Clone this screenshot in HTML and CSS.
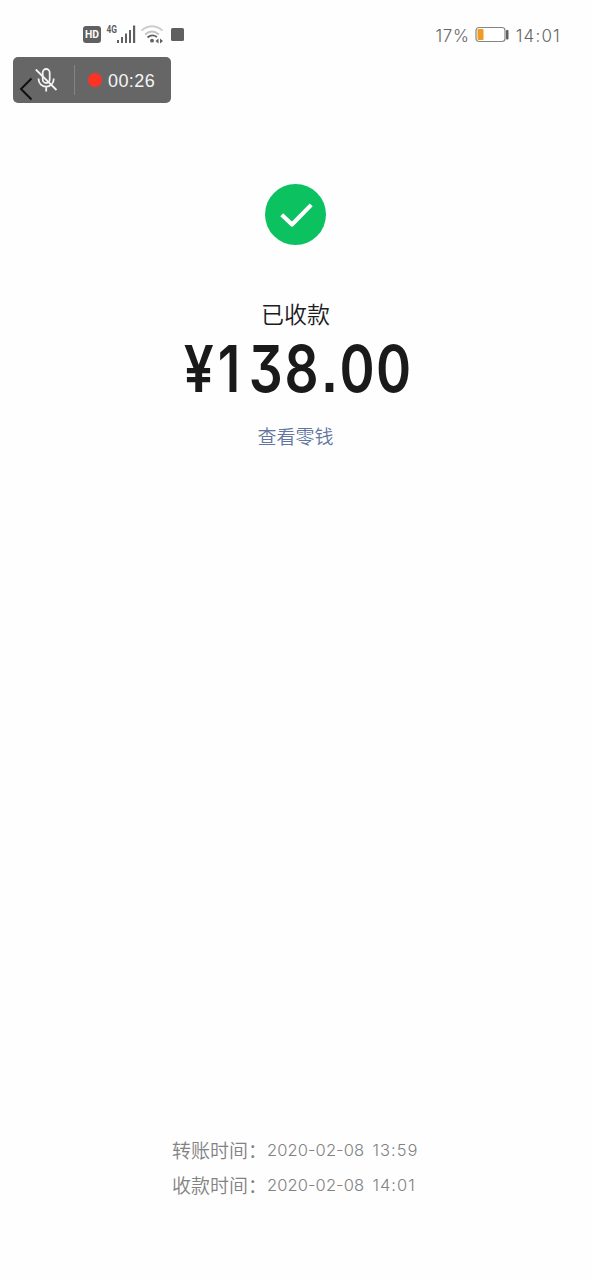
FILE: index.html
```
<!DOCTYPE html>
<html lang="zh-CN">
<head>
<meta charset="utf-8">
<title>已收款</title>
<link rel="stylesheet" href="styles.css">
</head>
<body>
<div class="screen">
  <header class="status">
    <div class="status-left">
      <svg class="signals" viewBox="0 0 104 24" width="104" height="24">
        <rect x="0" y="4" width="18" height="17" rx="3" fill="#606060"/>
        <text x="9" y="16.4" class="hd" textLength="14" lengthAdjust="spacingAndGlyphs">HD</text>
        <text x="23.5" y="10.5" class="net" textLength="10.5" lengthAdjust="spacingAndGlyphs">4G</text>
        <g fill="#606060">
          <rect x="34" y="18" width="2" height="3"/>
          <rect x="38" y="15" width="2" height="6"/>
          <rect x="42" y="11.5" width="2" height="9.5"/>
          <rect x="46" y="8" width="2" height="13"/>
          <rect x="50" y="3.5" width="2.2" height="17.5"/>
        </g>
        <g fill="none" stroke-width="1.800">
          <path d="M58.500 8.500Q69 0 79.500 8.500" stroke="#cdcdcd"/>
          <path d="M62 12.500Q69 6.500 76 12.500" stroke="#c4c4c4"/>
          <path d="M64.500 15.500Q69 11.500 74 15" stroke="#606060"/>
        </g>
        <circle cx="69" cy="18.700" r="1.900" fill="#606060"/>
        <path d="M75.500 16.500v5l-3-2.500zM77 16.500v5l3-2.500z" fill="#606060"/>
        <rect x="88" y="6" width="13" height="13" rx="1.500" fill="#606060"/>
      </svg>
    </div>
    <div class="status-right">
      <span class="percent">17%</span>
      <svg class="battery" viewBox="0 0 35 18" width="35" height="18">
        <rect x="1" y="1.500" width="29" height="14" rx="3" fill="#fff" stroke="#858585" stroke-width="1.200"/>
        <rect x="2.500" y="3" width="6" height="11" rx="1" fill="#ee9b22"/>
        <rect x="31" y="4" width="2.500" height="9.500" rx=".8" fill="#606060"/>
      </svg>
      <span class="clock">14:01</span>
    </div>
  </header>

  <div class="recorder">
    <svg class="mic" viewBox="0 0 61 46" width="61" height="46" fill="none">
      <path d="M18.500 21.500L8 32L18.500 42.500" stroke="#111" stroke-width="2"/>
      <g stroke="#f2f2f2" stroke-width="1.800">
        <rect x="29.700" y="12" width="7" height="14" rx="3.500"/>
        <path d="M25.500 21.500C25.500 32.500 40.800 32.500 40.800 21.500M33.200 30v4.500M22.800 12.500L43.500 33"/>
      </g>
    </svg>
    <span class="divider"></span>
    <span class="dot"></span>
    <span class="elapsed">00:26</span>
  </div>

  <main class="result">
    <svg class="check" viewBox="0 0 62 62" width="62" height="62">
      <circle cx="30.500" cy="31.500" r="30.500" fill="#0bc160"/>
      <path d="M16.700 31.700L27 41.500L46.200 21.900" fill="none" stroke="#fff" stroke-width="4.200" stroke-linejoin="round"/>
    </svg>
    <h1 class="title">已收款</h1>
    <svg class="amount" viewBox="0 0 240 80" width="240" height="80">
      <text class="amount-text" transform="translate(0 62.500) scale(.82 1)" x="27.700 64.800 109.500 153 187.200 220.700 265.500">¥138.00</text>
    </svg>
    <a class="link">查看零钱</a>
  </main>

  <footer class="times">
    <div class="row"><span class="label">转账时间：</span><span class="date">2020-02-08</span><span class="time">13:59</span></div>
    <div class="row"><span class="label">收款时间：</span><span class="date">2020-02-08</span><span class="time">14:01</span></div>
  </footer>
</div>
</body>
</html>
```
FILE: styles.css
```
body {
  margin: 0;
  background: #fefefe;
  font-family: "Noto Sans CJK SC", sans-serif;
}
.screen {
  display: flex;
  flex-direction: column;
  box-sizing: border-box;
  width: 591px;
  height: 1280px;
  padding-top: 22px;
  overflow: hidden;
}
.status {
  display: flex;
  justify-content: space-between;
  height: 26px;
  padding: 0 30px 0 83px;
}
.signals, .battery, .mic, .check, .amount {
  display: block;
}
.amount {
  overflow: visible;
}
.hd {
  font: 700 10px Roboto, sans-serif;
  fill: #fff;
  text-anchor: middle;
}
.net {
  font: 700 10px Roboto, sans-serif;
  fill: #606060;
}
.status-right {
  display: flex;
  align-items: center;
  color: #666;
  font: 300 17px/26px Inter, sans-serif;
}
.percent {
  padding-top: 2px;
  letter-spacing: .7px;
}
.battery {
  margin: 0 6px 0 5px;
}
.clock {
  padding-top: 2px;
  letter-spacing: 1.2px;
}
.recorder {
  display: flex;
  align-items: center;
  width: 158px;
  height: 46px;
  margin: 9px 0 0 13px;
  border-radius: 5px;
  background: #666;
}
.divider {
  width: 1px;
  height: 30px;
  background: #858585;
}
.dot {
  width: 14px;
  height: 14px;
  margin: 0 6px 0 13px;
  border-radius: 50%;
  background: #fb3324;
}
.elapsed {
  padding-top: 3px;
  color: #f5f5f5;
  font: 400 18px/43px "Liberation Sans", sans-serif;
  letter-spacing: .4px;
}
.result {
  display: flex;
  flex-direction: column;
  align-items: center;
  padding-top: 80px;
}
.title {
  margin: 52px 0 0;
  color: #1c1c1c;
  font-size: 23px;
  font-weight: 350;
  line-height: 32px;
}
.amount-text {
  fill: #1a1a1a;
  font: 600 65px Inter, sans-serif;
  font-feature-settings: "cv09", "ss07";
  text-anchor: middle;
}
.link {
  margin-top: 13px;
  color: #6276a0;
  font-size: 19px;
  font-weight: 350;
  line-height: 28px;
}
.times {
  margin: auto 0 78px 172px;
  color: #828282;
}
.row {
  display: flex;
  align-items: center;
  height: 35px;
  white-space: nowrap;
}
.label {
  width: 95px;
  font-size: 19px;
  font-weight: 350;
}
.date, .time {
  padding-top: 2px;
  font: 300 16.5px/33px Inter, sans-serif;
}
.date {
  width: 105.5px;
  letter-spacing: .1px;
}
.time {
  letter-spacing: 1px;
}
```
